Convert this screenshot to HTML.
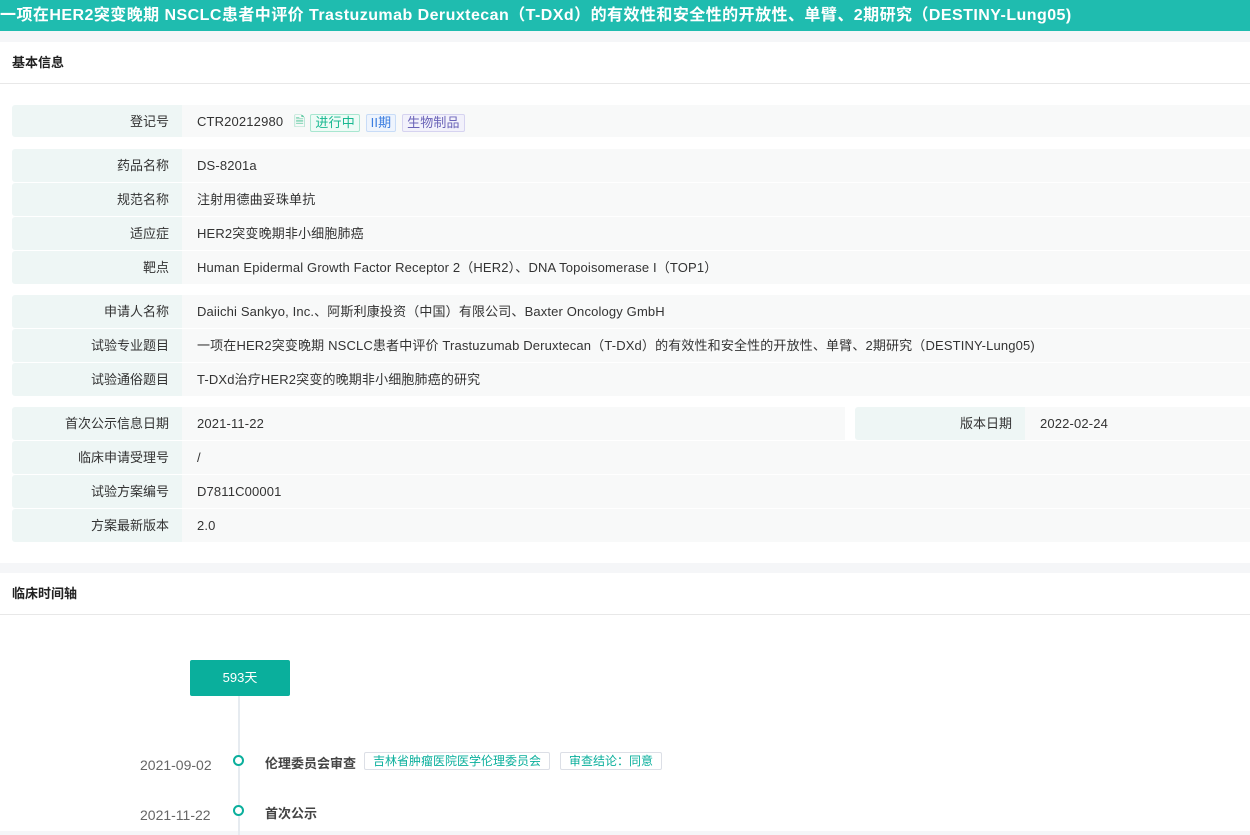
<!DOCTYPE html><html><head><meta charset="utf-8"><style>
*{margin:0;padding:0;box-sizing:border-box}
body{width:1250px;height:831px;overflow:hidden;background:#f5f6f8;font-family:"Liberation Sans","Noto Sans CJK SC",sans-serif;font-size:13px;color:#333}
.hd{height:31px;background:#1fbcaf;color:#fff;font-weight:bold;font-size:16px;line-height:31px;padding-left:0;white-space:nowrap;letter-spacing:0.45px}
.card{background:#fff;position:absolute;left:0;width:1250px}
.tt{height:42px;line-height:42px;padding-left:12px;font-weight:bold;font-size:13px;color:#222;border-bottom:1px solid #e8e8e8}
.row{position:absolute;left:12px;height:33px;line-height:33px;display:flex;width:1238px}
.l{width:170px;background:#eef6f5;text-align:right;padding-right:13px;color:#333;border-radius:3px 0 0 3px}
.v{flex:1;background:#f8f9f9;padding-left:15px;color:#333;letter-spacing:0.15px}
.tag{display:inline-block;height:18px;line-height:16px;padding:0 4px;font-size:13px;border:1px solid;border-radius:2px;vertical-align:middle;margin-left:2px}
</style></head><body>
<div class="hd">一项在HER2突变晚期 NSCLC患者中评价 Trastuzumab Deruxtecan（T-DXd）的有效性和安全性的开放性、单臂、2期研究（DESTINY-Lung05)</div>
<div class="card" style="top:42px;height:521px">
<div class="tt">基本信息</div>
</div>
<div class="row" style="top:105px;height:32px"><div class="l">登记号</div><div class="v">CTR20212980 <span style="color:#5cc9a0;margin:0 3px 0 7px;font-size:14px">&#128462;</span><span class="tag" style="color:#17b890;border-color:#a8e6d0;background:#eefbf6">进行中</span> <span class="tag" style="color:#3a7de0;border-color:#c8dcf7;background:#eef4fd">II期</span> <span class="tag" style="color:#6a63b8;border-color:#d6d3f0;background:#f2f1fb">生物制品</span></div></div>
<div class="row" style="top:149px"><div class="l">药品名称</div><div class="v">DS-8201a</div></div>
<div class="row" style="top:183px"><div class="l">规范名称</div><div class="v">注射用德曲妥珠单抗</div></div>
<div class="row" style="top:217px"><div class="l">适应症</div><div class="v">HER2突变晚期非小细胞肺癌</div></div>
<div class="row" style="top:251px"><div class="l">靶点</div><div class="v">Human Epidermal Growth Factor Receptor 2（HER2）、DNA Topoisomerase I（TOP1）</div></div>
<div class="row" style="top:295px"><div class="l">申请人名称</div><div class="v">Daiichi Sankyo, Inc.、阿斯利康投资（中国）有限公司、Baxter Oncology GmbH</div></div>
<div class="row" style="top:329px"><div class="l">试验专业题目</div><div class="v">一项在HER2突变晚期 NSCLC患者中评价 Trastuzumab Deruxtecan（T-DXd）的有效性和安全性的开放性、单臂、2期研究（DESTINY-Lung05)</div></div>
<div class="row" style="top:363px"><div class="l">试验通俗题目</div><div class="v">T-DXd治疗HER2突变的晚期非小细胞肺癌的研究</div></div>
<div class="row" style="top:407px"><div class="l">首次公示信息日期</div><div class="v" style="flex:none;width:663px">2021-11-22</div><div style="width:10px;background:#fff"></div><div class="l" style="border-radius:3px 0 0 3px">版本日期</div><div class="v">2022-02-24</div></div>
<div class="row" style="top:441px"><div class="l">临床申请受理号</div><div class="v">/</div></div>
<div class="row" style="top:475px"><div class="l">试验方案编号</div><div class="v">D7811C00001</div></div>
<div class="row" style="top:509px"><div class="l">方案最新版本</div><div class="v">2.0</div></div>
<div class="card" style="top:573px;height:258px">
<div class="tt">临床时间轴</div>
<div style="position:absolute;left:238px;top:122px;width:2px;height:140px;background:#e6ebf0"></div>
<div style="position:absolute;left:190px;top:87px;width:100px;height:36px;background:#0aaf9c;color:#fff;text-align:center;line-height:36px;border-radius:2px">593天</div>
<div style="position:absolute;left:233px;top:182px;width:11px;height:11px;border:2px solid #0aaf9c;border-radius:50%;background:#fff"></div>
<div style="position:absolute;left:233px;top:232px;width:11px;height:11px;border:2px solid #0aaf9c;border-radius:50%;background:#fff"></div>
<div style="position:absolute;left:140px;top:184px;color:#666;font-size:14px">2021-09-02</div>
<div style="position:absolute;left:140px;top:234px;color:#666;font-size:14px">2021-11-22</div>
<div style="position:absolute;left:265px;top:180px;font-weight:bold;color:#444">伦理委员会审查</div>
<div style="position:absolute;left:364px;top:179px;height:18px;line-height:16px;padding:0 8px;border:1px solid #dcdfe6;color:#0aaf9c;font-size:12px;border-radius:2px">吉林省肿瘤医院医学伦理委员会</div>
<div style="position:absolute;left:560px;top:179px;height:18px;line-height:16px;padding:0 8px;border:1px solid #dcdfe6;color:#0aaf9c;font-size:12px;border-radius:2px">审查结论：同意</div>
<div style="position:absolute;left:265px;top:230px;font-weight:bold;color:#444">首次公示</div>
</div>
</body></html>
